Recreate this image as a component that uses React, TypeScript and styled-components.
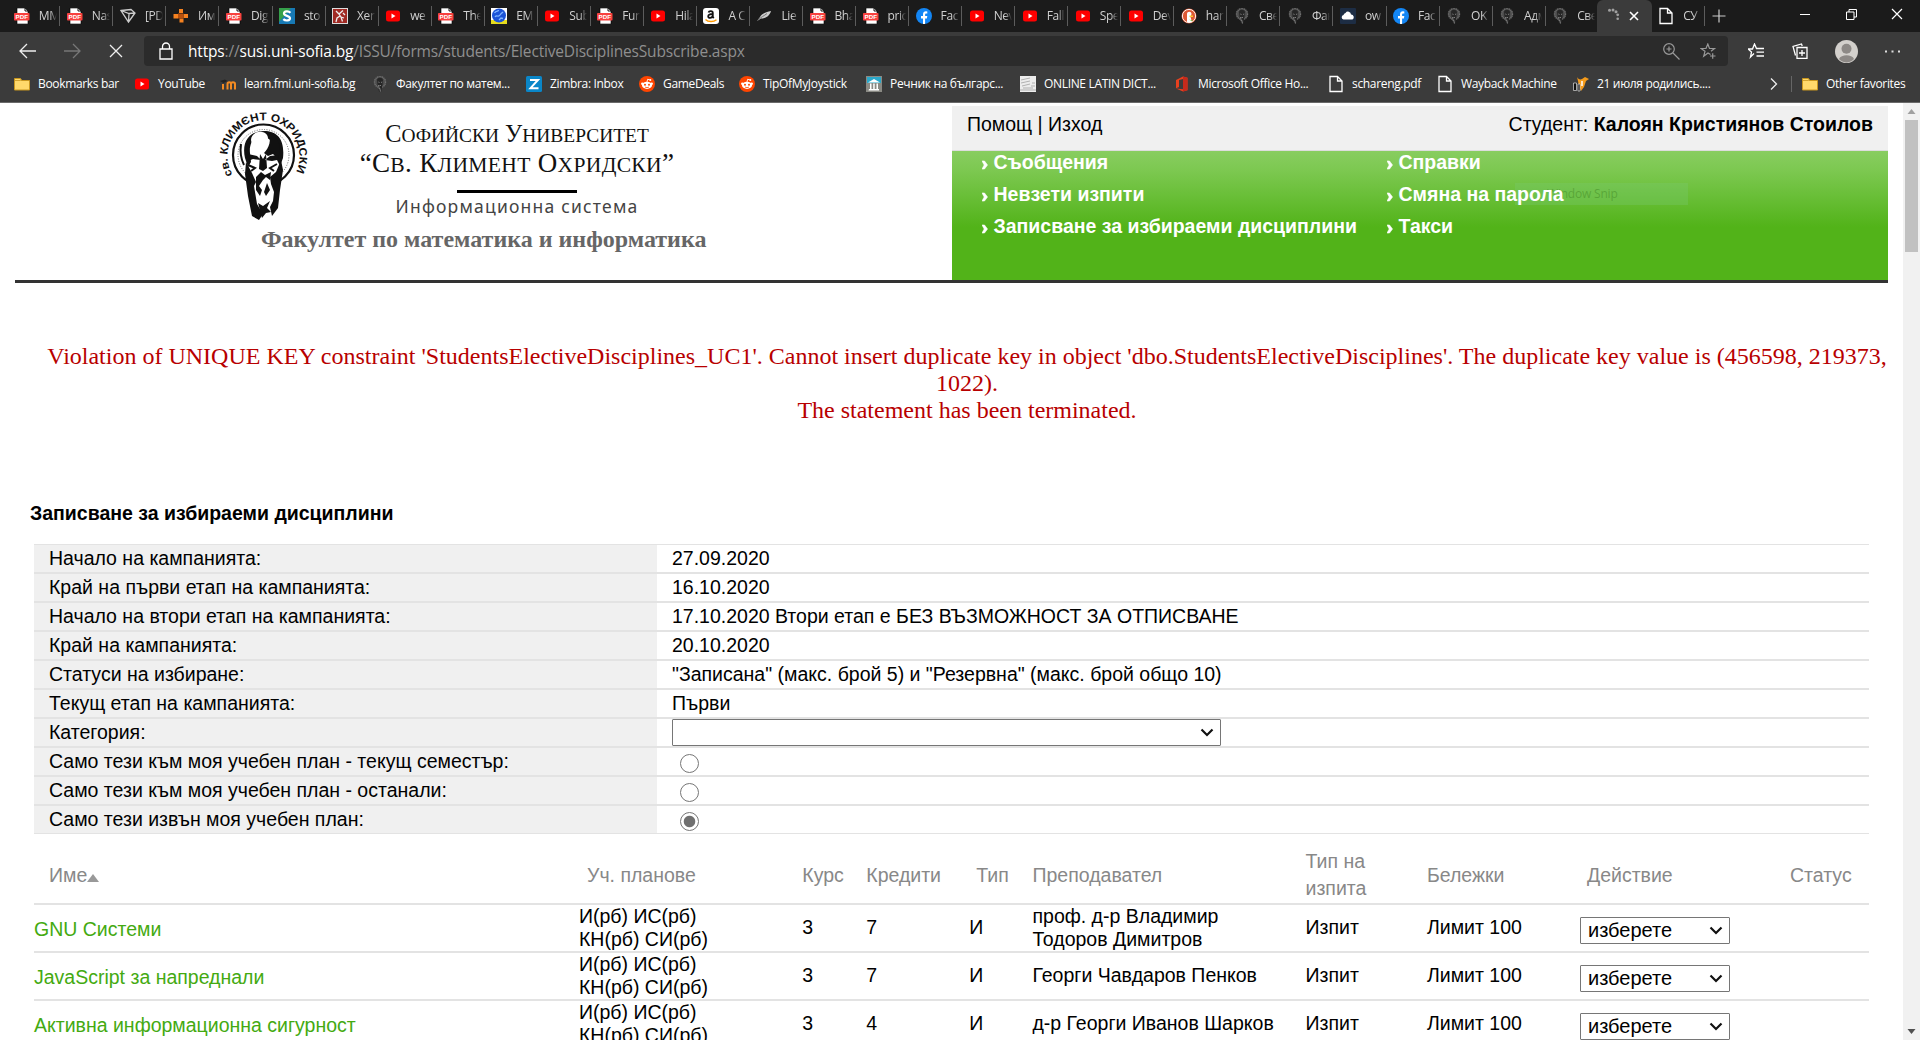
import React from "react";
import styled, { createGlobalStyle, css } from "styled-components";

const GlobalStyle = createGlobalStyle`
  * { box-sizing: border-box; }
  html, body { margin: 0; padding: 0; overflow: hidden; background: #fff; }
`;

const ui = css`font-family: "Open Sans", "Noto Sans", sans-serif;`;
const arial = css`font-family: "Liberation Sans", Arial, sans-serif;`;
const times = css`font-family: "Liberation Serif", "Times New Roman", serif;`;

const Window = styled.div`
  width: 1920px; height: 1040px; overflow: hidden;
  display: flex; flex-direction: column; background: #fff;
`;

/* ---------- browser chrome ---------- */
const TabStrip = styled.div`
  ${ui} height: 32px; flex: none; display: flex; align-items: stretch;
  padding-left: 7.3px; background: #1b1b1b; color: #d0d0d0;
`;
const TabBox = styled.div<{ $active?: boolean }>`
  width: 53.05px; flex: none; display: flex; align-items: center; position: relative;
  padding-left: 6.5px; gap: 9px;
  ${p => p.$active && css`
    background: #3b3b3b; border-radius: 6px 6px 0 0; margin: 0 0 0 -2px; width: 55px; padding-left: 8px; gap: 8px;
  `}
  &::after {
    content: ""; position: absolute; right: 0; top: 6px; width: 1px; height: 20px;
    background: ${p => (p.$active ? "transparent" : "#5c5c5c")};
  }
`;
const TabLabel = styled.span`
  width: 18px; overflow: hidden; white-space: nowrap; font-size: 12px; line-height: 18px; letter-spacing: -0.4px;
  -webkit-mask-image: linear-gradient(90deg, #000 60%, transparent 100%);
  mask-image: linear-gradient(90deg, #000 60%, transparent 100%);
`;
const NewTab = styled.div`width: 29px; display: flex; align-items: center; justify-content: center;`;
const Captions = styled.div`margin-left: auto; display: flex;`;
const Caption = styled.div`width: 46px; display: flex; align-items: center; justify-content: center; padding-bottom: 4px;`;
const Toolbar = styled.div`
  ${ui} height: 38px; flex: none; display: flex; align-items: center; background: #3b3b3b;
`;
const NavButtons = styled.div`width: 144px; flex: none; display: flex; align-items: center; padding-left: 19px; gap: 28px;`;
const AddressBar = styled.div`
  width: 1584px; height: 30px; background: #2b2b2b; border-radius: 4px;
  display: flex; align-items: center; padding: 0 11px 0 15px;
`;
const Url = styled.div`
  flex: 1; margin-left: 15px; font-size: 15.5px; line-height: 22px; color: #8f8f8f; white-space: nowrap; letter-spacing: -0.17px;
  b { font-weight: 400; color: #fff; }
`;
const AddressActions = styled.div`display: flex; gap: 20px; align-items: center;`;
const ToolActions = styled.div`
  flex: 1; display: flex; align-items: center; justify-content: space-between; padding: 0 20px 0 20px;
`;
const BookmarkBar = styled.div`
  ${ui} height: 33px; flex: none; background: #3b3b3b; border-bottom: 1px solid #6a6a6a; display: flex; align-items: center;
  padding: 0 0 5px 14px; color: #fff; font-size: 12px;
`;
const Bookmark = styled.div<{ $w: number }>`
  width: ${p => p.$w}px; flex: none; display: flex; align-items: center; gap: 8px; white-space: nowrap;
  letter-spacing: -0.33px;
`;
const BarDivider = styled.div`width: 1px; height: 16px; background: #666; margin: 0 10px 0 13px;`;

/* ---------- page ---------- */
const Viewport = styled.div`flex: 1; min-height: 0; display: flex;`;
const Page = styled.div`
  ${arial} flex: 1; min-width: 0; overflow: hidden; font-size: 19.5px; color: #000; padding: 3px 15px 0 15px;
`;
const Header = styled.header`height: 177px; display: flex; justify-content: space-between; border-bottom: 3px solid #333;`;
const Brand = styled.div`width: 937px; display: flex; flex-direction: column;`;
const BrandRow = styled.div`height: 119px; display: flex; padding-left: 197px;`;
const BrandText = styled.div`
  width: 318px; margin-left: 42px; display: flex; flex-direction: column; align-items: center; white-space: nowrap; color: #111;
`;
const BrandLine = styled.div<{ $size: number; $top: number; $ls: number }>`
  ${times} font-size: ${p => p.$size}px; line-height: 28px; margin-top: ${p => p.$top}px; letter-spacing: ${p => p.$ls}px;
  small { font-size: 0.8em; }
`;
const BrandRule = styled.div`width: 120px; height: 3px; background: #000; margin-top: 11px;`;
const BrandSub = styled.div`
  font-family: "Noto Sans", sans-serif; font-size: 17.5px; line-height: 24px; margin-top: 1px; letter-spacing: 1.2px; color: #444;
`;
const Faculty = styled.div`
  ${times} font-weight: 700; font-size: 24px; line-height: 28px; color: #666; padding-left: 246px; white-space: nowrap;
`;
const UserPanel = styled.div`width: 936px; display: flex; flex-direction: column;`;
const UserBar = styled.div`
  height: 45px; background: #f0f0f0; border-bottom: 1px solid #ddd; display: flex; justify-content: space-between;
  padding: 7px 15px 0; line-height: 22px;
`;
const Menu = styled.nav`
  flex: 1; position: relative; background: linear-gradient(#88cd60 0, #7cc850 20px, #52b319 76px, #52b319 100%);
  display: grid; grid-template-columns: 405px 1fr; grid-auto-rows: 32px; align-content: start; padding: 0 0 0 30px;
`;
const MenuItem = styled.a`
  color: #fff; font-weight: 700; line-height: 23px; display: flex; gap: 5.5px; white-space: nowrap; z-index: 1;
  svg { margin-top: 9px; }
`;
const SnipGhost = styled.div`
  ${ui} position: absolute; left: 563px; top: 32px; width: 173px; height: 22px; background: rgba(120, 200, 110, 0.35);
  color: rgba(60, 130, 30, 0.45); font-size: 12px; line-height: 22px; padding-left: 32px; letter-spacing: -0.2px;
`;
const ErrorText = styled.div`
  ${times} margin-top: 60px; margin-left: 15px; width: 1874px; font-size: 24px; line-height: 27px; color: #b80000; text-align: center;
`;
const Title = styled.h1`font-size: 19.5px; line-height: 24px; font-weight: 700; margin: 77px 0 19px 15px;`;

const Info = styled.div`margin-left: 19px; width: 1835px;`;
const InfoRow = styled.div`
  height: 29px; display: grid; grid-template-columns: 623px 1fr; grid-template-rows: 27px; line-height: 26px;
  border-top: 1px solid #e3e3e3; border-bottom: 1px solid #e3e3e3;
`;
const InfoLabel = styled.div`background: #f0f0f0; padding-left: 15px;`;
const InfoValue = styled.div`padding-left: 15px; white-space: nowrap;`;
const SelectBox = styled.button<{ $w: number }>`
  ${arial} width: ${p => p.$w}px; height: 27px; display: flex; align-items: center; justify-content: space-between;
  border: 1px solid #767676; border-radius: 1px; background: #fff; font-size: 20px; padding: 0 6px 0 7px; color: #000;
`;
const RadioDot = styled.span<{ $on?: boolean }>`
  display: block; width: 19px; height: 19px; margin: 6px 0 0 8px; border-radius: 50%; border: 1px solid #767676;
  background: ${p => (p.$on ? "radial-gradient(circle, #6f6f6f 5.3px, #fff 6.2px)" : "#fff")};
`;

const columns = css`
  display: grid;
  grid-template-columns: 545px 223.3px 64px 103px 63.2px 273px 121.500px 153px 164px 125px;
`;
const Course = styled.div`
  ${columns} height: 48px; line-height: 23px; border-top: 1px solid #e3e3e3; border-bottom: 1px solid #e3e3e3; align-items: center;
`;
const HeadRow = styled.div`
  ${columns} height: 70px; line-height: 27px; align-items: center; color: #888; border-bottom: 1px solid #e3e3e3; padding-top: 13px;
`;
const Head = styled.div<{ $pad?: number; $w?: number }>`
  padding-left: ${p => p.$pad ?? 0}px; width: ${p => (p.$w ? p.$w + "px" : "auto")};
`;
const CourseLink = styled.a`color: #4a1; padding-top: 3px;`;
const Lines = styled.div`white-space: pre-line; margin-top: -1px;`;
const Cell = styled.div`padding-bottom: 2px;`;
const SelectCell = styled.div`padding-top: 4px;`;

const Scroll = styled.div`
  width: 17px; background: #f1f1f1; display: flex; flex-direction: column; align-items: center; padding: 5px 0 5px;
`;
const Thumb = styled.div`width: 13px; height: 132px; background: #c1c1c1; margin-top: 5px; margin-bottom: auto;`;

/* ---------- icons ---------- */
const IconSvg = styled.svg`flex: none;`;
const Svg = ({ children }: { children: React.ReactNode }) => (
  <IconSvg width={16} height={16} viewBox="0 0 16 16" fill="none">{children}</IconSvg>
);

const Icon = ({ k }: { k: string }) => {
  switch (k) {
    case "pdf":
      return (
        <Svg>
          <path d="M3 0h8l3 3v13H3z" fill="#fff" stroke="#000" strokeWidth=".6" /><path d="M11 0v3h3" stroke="#000" strokeWidth=".9" />
          <rect x="0" y="5" width="15.500" height="7.500" rx=".8" fill="#f8413e" />
          <text x="1.600" y="11" fontFamily="Liberation Sans" fontWeight="700" fontSize="6.200" fill="#fff">PDF</text>
        </Svg>
      );
    case "yt":
      return <Svg><rect x="1" y="2.500" width="14" height="11" rx="2.500" fill="#f00" /><path d="M6.500 5.500v5l4-2.500z" fill="#fff" /></Svg>;
    case "fb":
      return <Svg><circle cx="8" cy="8" r="8" fill="#1386f5" /><path d="M7 16v-5.500H5V8h2V6.300C7 4.300 8.200 3.300 10 3.300l1.300.1v2h-1c-.9 0-1.200.5-1.200 1.200V8h2.200l-.4 2.500H9.100V16z" fill="#fff" /></Svg>;
    case "head":
      return (
        <Svg>
          <circle cx="8" cy="6" r="5.500" fill="#4c4c4c" stroke="#707070" strokeWidth="1.400" strokeDasharray="1.200 .5" />
          <path d="M5 3.500C6 1 10.500 1 11 4l-.5 5-1.200 6.500H7L5.500 9z" fill="#262626" />
          <path d="M6.300 6l1.200.5M9 6.500l1.200-.5M7.500 9.500h1.500M7.700 12l.8 3.500M6.500 9l.7 4" stroke="#888" strokeWidth=".9" />
        </Svg>
      );
    case "sketch":
      return <Svg><path d="M1 2.500l10-1 4 3.500-6.500 9zM1 2.500l8 3 6-.5M9 5.500l-.5 8.500" stroke="#ccc" strokeWidth="1.300" /></Svg>;
    case "orange":
      return <Svg><path d="M6 1h4v4H6zM6.500 10.500h4v4h-4zM.5 6H5v4.500H.5zM10.500 6H15v4h-4.500z" fill="#f58220" /><path d="M5 5.500h5.500v5H5z" fill="#b8500c" /></Svg>;
    case "s":
      return <Svg><rect width="16" height="16" fill="#1779b5" /><path d="M0 0h12L0 14z" fill="#35a04a" /><path d="M11.500 4.700C9.500 2.800 5 3 5 5.600c0 2.800 6 1.800 6 4.700 0 2.600-4.500 2.900-6.700.8" stroke="#fff" strokeWidth="2.200" /></Svg>;
    case "red":
      return <Svg><rect width="16" height="16" fill="#ddd" /><rect x="1" y="1" width="14" height="14" fill="#a02a24" /><path d="M4 3l3 3 4-3.500M7 6l2 3 3 1M8 8l-3 2-1 4M9 9l1.500 4.500M11 5l2 2" stroke="#eee" strokeWidth="1.300" /></Svg>;
    case "em":
      return <Svg><rect width="16" height="16" fill="#fff" /><path d="M0 12h16v4H0z" fill="#e6dc1e" /><circle cx="8" cy="7.500" r="7" fill="#1b53d8" /><path d="M3.500 5c2-3 4-1 4-3M4 9c2-3 3 1 5-2s2-2 3-3M8 12l2-2 2 .5" stroke="#7fb4ff" strokeWidth="1.300" /></Svg>;
    case "amazon":
      return <Svg><rect width="16" height="16" rx="3" fill="#fff" /><path d="M5.500 4.500C6 2.800 9.800 2.600 9.800 4.900V9l1 1M9.800 6C7 6 5.200 6.500 5.200 8.300c0 2.400 3.500 2 4.600-.3" stroke="#111" strokeWidth="1.800" /><path d="M2.500 11.500c3 2.700 8 2.700 11 .3" stroke="#f90" strokeWidth="1.400" /></Svg>;
    case "feather":
      return <Svg><path d="M1 13l3-4c2-4 7-5 11-6-1 4-5 8-10 7.500z" fill="#ccc" /><path d="M2 12c3-3 6-4 9-6.500" stroke="#777" /></Svg>;
    case "duck":
      return <Svg><circle cx="8" cy="8" r="7.500" fill="#de5833" /><circle cx="8" cy="8" r="6.600" stroke="#fff" strokeWidth=".9" /><path d="M6 14V6c0-3 4.500-3 4.500 0l-1 3 1.500 5z" fill="#fff" /><path d="M8.500 7.500h3.500v1.500H8.500z" fill="#fc3" /><path d="M8 11.500l3.500 1v1z" fill="#5b3" /></Svg>;
    case "cloud":
      return <Svg><rect width="16" height="16" rx="1" fill="#1d2d44" /><path d="M3.500 11.500a2.300 2.300 0 010-4.500 2.500 2.500 0 012-2 3 3 0 015.500 1.500 2.700 2.700 0 011.500 5z" fill="#fff" /></Svg>;
    case "page":
      return <IconSvg width="16" height="18" viewBox="0 0 16 18" fill="none"><path d="M2 1.500h7.500L14 6v10.500H2zM9.500 1.500V6H14" stroke="#fff" strokeWidth="1.300" /></IconSvg>;
    case "folder":
      return <Svg><path d="M.5 2.500h6l1 2h8v9.500H.5z" fill="#ffd96b" stroke="#c8961e" /><path d="M1 4.500h5.500l1-1" stroke="#c8961e" strokeWidth=".8" /></Svg>;
    case "moodle":
      return <Svg><path d="M3 13.500V8M7.500 13.500V8c0-2.500 3.500-2.500 3.500 0v5.500M11 8c0-2.500 4-2.500 4 0v5.500" stroke="#f28a22" strokeWidth="2" /><path d="M0 5l5-1.500 2.500 1.500-4 2z" fill="#222" /></Svg>;
    case "zimbra":
      return <Svg><rect width="16" height="16" rx="1.500" fill="#0a86c8" /><path d="M4 4h8L4.500 12.200H12.500" stroke="#fff" strokeWidth="2" /></Svg>;
    case "reddit":
      return <Svg><circle cx="8" cy="8" r="8" fill="#ff4500" /><ellipse cx="8" cy="9.300" rx="5" ry="3.600" fill="#fff" /><circle cx="6" cy="8.700" r="1" fill="#ff4500" /><circle cx="10" cy="8.700" r="1" fill="#ff4500" /><path d="M6 11c1 .8 3 .8 4 0" stroke="#ff4500" strokeWidth=".8" /><path d="M8 6l.6-2.700 2.200.5" stroke="#fff" strokeWidth=".9" /><circle cx="11.300" cy="4" r="1" fill="#fff" /><circle cx="3.300" cy="7.800" r="1.200" fill="#fff" /><circle cx="12.700" cy="7.800" r="1.200" fill="#fff" /></Svg>;
    case "dict":
      return <Svg><rect width="16" height="16" fill="#8a8a84" /><rect x="1" y="1" width="14" height="6" fill="#2aa7c9" /><path d="M2 6.500L8 3l6 3.500zM3 13h10v1.500H2.500zM4 7.500h1.500V13H4zM7.200 7.500h1.500V13H7.200zM10.500 7.500H12V13h-1.500z" fill="#fff" /></Svg>;
    case "latin":
      return <Svg><rect width="16" height="16" fill="#ececec" /><path d="M1 4l9-2M1 7l9-2M2 10l8-2M0 14h16M3 12h10M12 7h3M11 10h4" stroke="#aaa" strokeWidth=".9" /></Svg>;
    case "office":
      return <Svg><path d="M2 4l7-3.500 4.500 1.300v12.400L9 15.500l-7-3 7 .8V3L5 4v7l-3 1.300z" fill="#e8401e" /><path d="M9 .5l4.500 1.300v12.400L9 15.500z" fill="#c42a1c" /></Svg>;
    case "bird":
      return <Svg><path d="M4 1c1 2 3 3 5 2l3-2 4 2-3 2-2 6-3 4-2-5-1-5z" fill="#f59b1b" /><path d="M.5 7h3v7.500h-3zM5 8h2v7H5z" fill="#111" stroke="#ddd" strokeWidth=".7" /><path d="M9 5v5" stroke="#fff" strokeWidth="1.500" /></Svg>;
    default:
      return (
        <Svg>
          <g fill="#a0a0a0">
            <circle cx="4.500" cy="2.300" r="1.500" /><circle cx="8" cy="2" r="1.500" /><circle cx="11" cy="3.800" r="1.500" />
            <circle cx="12.700" cy="6.800" r="1.400" /><circle cx="12.700" cy="10.800" r="1.300" />
          </g>
        </Svg>
      );
  }
};

const Chevron = () => (
  <svg width="14" height="9" viewBox="0 0 14 9" fill="none"><path d="M1.500 1.500L7 7l5.500-5.500" stroke="#111" strokeWidth="2.200" /></svg>
);
const MenuArrow = () => (
  <svg width="6" height="10" viewBox="0 0 6 10" fill="none"><path d="M0 1h2.500l3 4-3 4H0l2.200-4z" fill="#fff" stroke="#fff" strokeWidth=".6" /></svg>
);

const CrestSvg = styled.svg`flex: none; margin-top: -2px;`;
const Crest = () => (
  <CrestSvg width="104" height="122" viewBox="0 0 104 122" fill="none">
    <defs><path id="crest-arc" d="M20.500 70.500A36 36 0 1 1 82.500 70.500" /></defs>
    <text fontFamily="Liberation Sans" fontWeight="700" fontSize="11" fill="#111">
      <textPath href="#crest-arc" textLength="148" lengthAdjust="spacingAndGlyphs">св. КЛИМЄНТ ОХРИДСКИ</textPath>
    </text>
    <circle cx="51.500" cy="51" r="30.500" stroke="#111" strokeWidth="2.200" />
    <circle cx="51.500" cy="51" r="25.500" stroke="#666" strokeWidth="1" strokeDasharray="1 1.500" />
    <path d="M32 52C28 34 40 27 52 27c14 0 22 8 19 26l-3 21-2 20-3 18-7 3-8 0-7-2-3-20-2-21z" fill="#fff" />
    <path d="M33 54C29 36 39 27 52 27c13 0 21 8 19 27l-3 8-4-8c1-12-5-21-15-22-8 1-12 8-11 17l1 9-3 5z" fill="#111" />
    <path d="M39 36c0-5 5-9 11-8s8 7 4 12c-4 3-11 2-13 6z" fill="#fff" />
    <path d="M56 29c9 2 12 9 12 18l-2 8-5-5-5 2-4-3c5-5 8-13 4-20z" fill="#111" />
    <path d="M29 40c-1 7 0 15 3 21" stroke="#111" strokeWidth="2" />
    <path d="M36 50l9 2 4 4-8-1-5 2zM67 51l-9 1-5 4 7 1 5-1zM48 50l3 5 3-5 1 14-4 3-4-2z" fill="#111" />
    <path d="M34 58l6 11 4 9-2 4 3 18 6 10-4 6-7-4-4-20-3-22zM69 56l-5 12-6 5 1 7 3 8-1 9-3 6 2 9 6-8 2-18 3-20z" fill="#111" />
    <path d="M44 73l5-5 4 3 6-3-1 8-4-3-3 3-4 6 3 4-2 6-4-6zM55 79l3 7-4 6-2-4zM46 99l5 3 7-5-3 7 4 4-5 1-4 5z" fill="#111" />
    <path d="M36 61l7 3-4 3M65 60l-7 4 4 3" stroke="#111" strokeWidth="2" />
  </CrestSvg>
);

/* ---------- data ---------- */
const tabs: [string, string][] = [
  ["pdf", "MM"], ["pdf", "Nas"], ["sketch", "[PD"], ["orange", "Им"], ["pdf", "Dig"], ["s", "sto"], ["red", "Xen"], ["yt", "we"],
  ["pdf", "The"], ["em", "EM"], ["yt", "Sub"], ["pdf", "Fun"], ["yt", "Hila"], ["amazon", "A C"], ["feather", "Lie"], ["pdf", "Bha"],
  ["pdf", "pric"], ["fb", "Fac"], ["yt", "Nev"], ["yt", "Fall"], ["yt", "Spe"], ["yt", "Dev"], ["duck", "har"], ["head", "Све"],
  ["head", "Фак"], ["cloud", "ow"], ["fb", "Fac"], ["head", "OK"], ["head", "Адм"], ["head", "Све"],
];
const bookmarks: [string, string, number][] = [
  ["folder", "Bookmarks bar", 120], ["yt", "YouTube", 86], ["moodle", "learn.fmi.uni-sofia.bg", 152],
  ["head", "Факултет по матем...", 154], ["zimbra", "Zimbra: Inbox", 113], ["reddit", "GameDeals", 100],
  ["reddit", "TipOfMyJoystick", 127], ["dict", "Речник на българс...", 154], ["latin", "ONLINE LATIN DICT...", 154],
  ["office", "Microsoft Office Ho...", 154], ["page", "schareng.pdf", 109], ["page", "Wayback Machine", 136], ["bird", "21 июля родились....", 197],
];
const menu = ["Съобщения", "Справки", "Невзети изпити", "Смяна на парола", "Записване за избираеми дисциплини", "Такси"];
const info: [string, string][] = [
  ["Начало на кампанията:", "27.09.2020"],
  ["Край на първи етап на кампанията:", "16.10.2020"],
  ["Начало на втори етап на кампанията:", "17.10.2020 Втори етап е БЕЗ ВЪЗМОЖНОСТ ЗА ОТПИСВАНЕ"],
  ["Край на кампанията:", "20.10.2020"],
  ["Статуси на избиране:", "\"Записана\" (макс. брой 5) и \"Резервна\" (макс. брой общо 10)"],
  ["Текущ етап на кампанията:", "Първи"],
];
const radios: [string, boolean][] = [
  ["Само тези към моя учебен план - текущ семестър:", false],
  ["Само тези към моя учебен план - останали:", false],
  ["Само тези извън моя учебен план:", true],
];
const courses: [string, string, string][] = [
  ["GNU Системи", "7", "проф. д-р Владимир\nТодоров Димитров"],
  ["JavaScript за напреднали", "7", "Георги Чавдаров Пенков"],
  ["Активна информационна сигурност", "4", "д-р Георги Иванов Шарков"],
];

export default function App() {
  return (
    <Window>
      <GlobalStyle />
      <TabStrip>
        {tabs.map(([k, t], i) => (
          <TabBox key={i}><Icon k={k} /><TabLabel>{t}</TabLabel></TabBox>
        ))}
        <TabBox $active>
          <Icon k="spin" />
          <svg width="10" height="10" viewBox="0 0 10 10"><path d="M1 1l8 8M9 1L1 9" stroke="#fff" strokeWidth="1.600" /></svg>
        </TabBox>
        <TabBox><Icon k="page" /><TabLabel>СУ</TabLabel></TabBox>
        <NewTab><svg width="14" height="14" viewBox="0 0 14 14"><path d="M7 .5v13M.5 7h13" stroke="#ccc" strokeWidth="1.200" /></svg></NewTab>
        <Captions>
          <Caption><svg width="10" height="10" viewBox="0 0 10 10"><path d="M0 5.500h10" stroke="#fff" /></svg></Caption>
          <Caption><svg width="11" height="11" viewBox="0 0 11 11" fill="none"><path d="M.5 3h7.500v7.500H.5zM3 3V.5h7.500V8H8" stroke="#fff" /></svg></Caption>
          <Caption><svg width="12" height="12" viewBox="0 0 12 12"><path d="M1 1l10 10M11 1L1 11" stroke="#fff" strokeWidth="1.200" /></svg></Caption>
        </Captions>
      </TabStrip>
      <Toolbar>
        <NavButtons>
          <svg width="17" height="16" viewBox="0 0 17 16" fill="none"><path d="M8 1L1 8l7 7M1 8h16" stroke="#eee" strokeWidth="1.300" /></svg>
          <svg width="17" height="16" viewBox="0 0 17 16" fill="none"><path d="M9 1l7 7-7 7M16 8H0" stroke="#777" strokeWidth="1.300" /></svg>
          <svg width="14" height="14" viewBox="0 0 14 14" fill="none"><path d="M1 1l12 12M13 1L1 13" stroke="#eee" strokeWidth="1.300" /></svg>
        </NavButtons>
        <AddressBar>
          <svg width="14" height="18" viewBox="0 0 14 18" fill="none"><path d="M1 7h12v10H1zM3.500 7V4.500a3.500 3.500 0 017 0V7" stroke="#fff" strokeWidth="1.300" /></svg>
          <Url><b>https</b>://<b>susi.uni-sofia.bg</b>/ISSU/forms/students/ElectiveDisciplinesSubscribe.aspx</Url>
          <AddressActions>
            <svg width="17" height="17" viewBox="0 0 17 17" fill="none"><path d="M10 10l6.500 6.500M6 3.500v5M3.500 6h5" stroke="#999" strokeWidth="1.200" /><circle cx="6" cy="6" r="5.300" stroke="#999" strokeWidth="1.200" /></svg>
            <svg width="17" height="17" viewBox="0 0 17 17" fill="none"><path d="M10.500 11.500L8 10l-4.300 3.200L5 8.300 1 5.500h5L7.800 1l1.700 4.500h5L11 8.300M10 13h5.500M12.700 10.200v5.600" stroke="#999" strokeWidth="1.200" /></svg>
          </AddressActions>
        </AddressBar>
        <ToolActions>
          <svg width="17" height="16" viewBox="0 0 17 16" fill="none"><path d="M6 10.500L2.500 14l1-5L0 6h4.500L6.500 1l2 4.500H16M8.500 9.200H16M8.500 13H16" stroke="#fff" strokeWidth="1.300" /></svg>
          <svg width="16" height="16" viewBox="0 0 16 16" fill="none"><path d="M5 4.500h10v11H5zM10 7v6M7 10h6M3.500 12.500L1 3.500 9.500 1l.7 2" stroke="#fff" strokeWidth="1.300" /></svg>
          <svg width="23" height="23" viewBox="0 0 23 23"><circle cx="11.500" cy="11.500" r="11.500" fill="#d3d0cc" /><circle cx="11.500" cy="8.800" r="5" fill="#8d8986" /><path d="M4 19c2-5 13-5 15 0-4 4.500-11 4.500-15 0z" fill="#8d8986" /></svg>
          <svg width="15" height="3" viewBox="0 0 15 3"><path d="M0 .5h2v2H0zM6.500.5h2v2h-2zM13 .5h2v2h-2z" fill="#ddd" /></svg>
        </ToolActions>
      </Toolbar>
      <BookmarkBar>
        {bookmarks.map(([k, t, w]) => <Bookmark key={t} $w={w}><Icon k={k} />{t}</Bookmark>)}
        <svg width="8" height="12" viewBox="0 0 8 12" fill="none"><path d="M1 .5L6.500 6 1 11.500" stroke="#eee" strokeWidth="1.300" /></svg>
        <BarDivider />
        <Bookmark $w={110}><Icon k="folder" />Other favorites</Bookmark>
      </BookmarkBar>

      <Viewport>
        <Page>
          <Header>
            <Brand>
              <BrandRow>
                <Crest />
                <BrandText>
                  <BrandLine $size={24.3} $top={14} $ls={0}>С<small>ОФИЙСКИ</small> У<small>НИВЕРСИТЕТ</small></BrandLine>
                  <BrandLine $size={27} $top={-1} $ls={0.3}>“С<small>В</small>. К<small>ЛИМЕНТ</small> О<small>ХРИДСКИ</small>”</BrandLine>
                  <BrandRule />
                  <BrandSub lang="bg">Информационна система</BrandSub>
                </BrandText>
              </BrandRow>
              <Faculty>Факултет по математика и информатика</Faculty>
            </Brand>
            <UserPanel>
              <UserBar>
                <span>Помощ | Изход</span>
                <span>Студент: <b>Калоян Кристиянов Стоилов</b></span>
              </UserBar>
              <Menu>
                <SnipGhost>Window Snip</SnipGhost>
                {menu.map(m => <MenuItem key={m}><MenuArrow />{m}</MenuItem>)}
              </Menu>
            </UserPanel>
          </Header>
          <ErrorText>
            Violation of UNIQUE KEY constraint 'StudentsElectiveDisciplines_UC1'. Cannot insert duplicate key in object 'dbo.StudentsElectiveDisciplines'. The duplicate key value is (456598, 219373,<br />1022).<br />The statement has been terminated.
          </ErrorText>
          <Title>Записване за избираеми дисциплини</Title>
          <Info>
            {info.map(([a, b]) => <InfoRow key={a}><InfoLabel>{a}</InfoLabel><InfoValue>{b}</InfoValue></InfoRow>)}
            <InfoRow><InfoLabel>Категория:</InfoLabel><InfoValue><SelectBox $w={549}><span /><Chevron /></SelectBox></InfoValue></InfoRow>
            {radios.map(([a, on]) => <InfoRow key={a}><InfoLabel>{a}</InfoLabel><InfoValue><RadioDot $on={on} /></InfoValue></InfoRow>)}
            <HeadRow>
              <Head $pad={15}>Име<svg width="12" height="8" viewBox="0 0 12 8"><path d="M6 0l6 8H0z" fill="#999" /></svg></Head>
              <Head $pad={8}>Уч. планове</Head>
              <Head>Курс</Head>
              <Head>Кредити</Head>
              <Head $pad={7}>Тип</Head>
              <Head>Преподавател</Head>
              <Head $w={80}>Тип на изпита</Head>
              <Head>Бележки</Head>
              <Head $pad={7}>Действие</Head>
              <Head $pad={46}>Статус</Head>
            </HeadRow>
            {courses.map(([n, cr, who]) => (
              <Course key={n}>
                <CourseLink>{n}</CourseLink>
                <Lines>{"И(рб) ИС(рб)\nКН(рб) СИ(рб)"}</Lines>
                <Cell>3</Cell><Cell>{cr}</Cell><Cell>И</Cell>
                <Lines>{who}</Lines>
                <Cell>Изпит</Cell><Cell>Лимит 100</Cell>
                <SelectCell><SelectBox $w={150}>изберете<Chevron /></SelectBox></SelectCell>
              </Course>
            ))}
          </Info>
        </Page>
        <Scroll>
          <svg width="9" height="7" viewBox="0 0 9 7"><path d="M4.500 1L8.500 6h-8z" fill="#a0a0a0" /></svg>
          <Thumb />
          <svg width="9" height="7" viewBox="0 0 9 7"><path d="M4.500 6L8.500 1h-8z" fill="#505050" /></svg>
        </Scroll>
      </Viewport>
    </Window>
  );
}
